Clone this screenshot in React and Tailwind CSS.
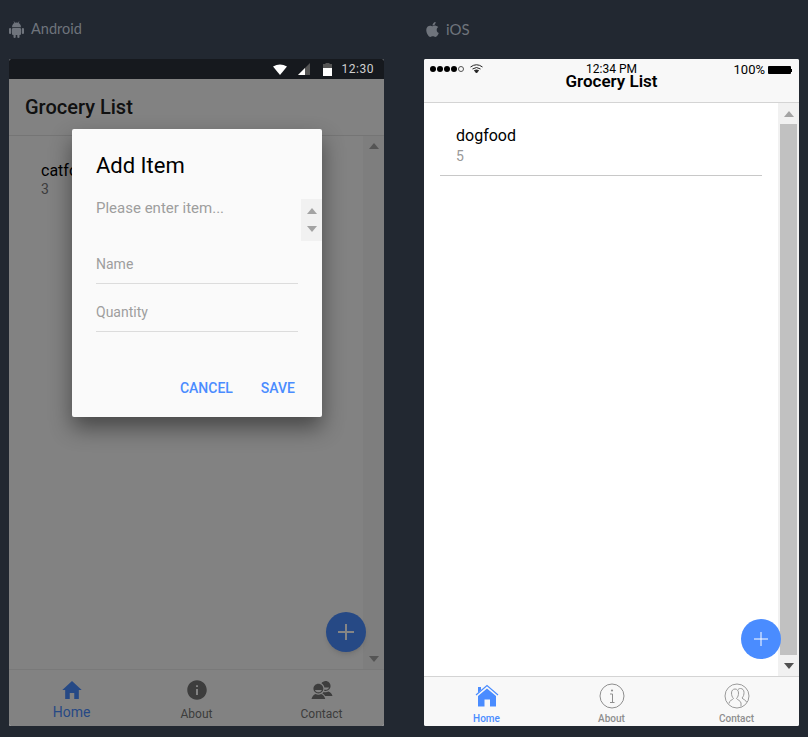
import {FaApple} from "react-icons/fa";
import {IoMdHome, IoMdInformationCircle, IoMdContacts} from "react-icons/io";

function Arrow({up, className}) {
  return (
    <svg width="10" height="6" viewBox="0 0 10 6" className={className}>
      <path d={up ? "M5 0L10 6H0Z" : "M5 6L10 0H0Z"} fill="currentColor" />
    </svg>
  );
}

function Tab({icon, label, className}) {
  return (
    <div className={`flex-1 flex flex-col items-center ${className}`}>
      {icon}
      <span>{label}</span>
    </div>
  );
}

function AndroidLogo() {
  return (
    <svg width="15" height="17" viewBox="0 0 15 17" fill="currentColor">
      <path d="M3 6.200A4.500 4.800 0 0 1 12 6.200Z" />
      <path d="M5 .5L6 2.500M10 .5L9 2.500" stroke="currentColor" strokeWidth=".7" />
      <rect x="3" y="7" width="9" height="7" rx="1" />
      <rect x="0" y="7" width="2.200" height="6" rx="1.100" />
      <rect x="12.800" y="7" width="2.200" height="6" rx="1.100" />
      <rect x="4.500" y="13" width="2.200" height="4" rx="1.100" />
      <rect x="8.300" y="13" width="2.200" height="4" rx="1.100" />
    </svg>
  );
}

function IosHomeIcon() {
  return (
    <svg width="24" height="23" viewBox="0 0 24 23" className="mt-[7px] mb-[6px]">
      <path d="M1 11L12 1.500L23 11" fill="none" stroke="currentColor" strokeWidth="1.200" />
      <path d="M3 3H6V6L3 8.500Z" fill="currentColor" />
      <path d="M3 12L12 4.500L21 12V22.500H15V15.500H9.500V22.500H3Z" fill="currentColor" />
    </svg>
  );
}

function IosInfoIcon() {
  return (
    <svg width="26" height="26" viewBox="0 0 26 26" className="mt-[6px] mb-[4px]" fill="none" stroke="currentColor">
      <circle cx="13" cy="13" r="12" />
      <circle cx="13" cy="7.500" r="1.100" fill="currentColor" stroke="none" />
      <path d="M11 11H13.500V19M11 19.500H15.500" />
    </svg>
  );
}

function IosContactIcon() {
  return (
    <svg width="26" height="26" viewBox="0 0 26 26" className="mt-[6px] mb-[4px]" fill="none" stroke="currentColor" strokeWidth=".9">
      <circle cx="13" cy="13" r="12" />
      <path d="M5 20.500C5 17.500 8.500 17 9.500 15.500C8 14 7.500 12 7.500 10C7.500 7.500 9 6 11 6C13 6 14.500 7.500 14.500 10C14.500 12 14 14 12.500 15.500C13.500 17 16.500 17.500 17 20V23.500" />
      <path d="M14 6.500C14.800 5.700 15.700 5.500 16.500 5.500C18.500 5.500 20 7 20 9.500C20 11.500 19.500 13.500 18 15C19 16.500 21.500 16.500 22.500 19" />
    </svg>
  );
}

function AndroidPhone() {
  return (
    <div className="relative h-[667px] flex flex-col rounded-[2px] overflow-hidden bg-[#fafafa]">
      <div className="h-5 shrink-0 bg-[#16191e] flex items-center justify-end text-[12px] tracking-[0.5px] text-[#d0d0d0] pr-[10px] relative z-20">
        <svg width="14" height="11" viewBox="0 0 14 11" className="mr-[11px]">
          <path d="M0 2.500Q7-1.500 14 2.500L7 11Z" fill="#fff" />
        </svg>
        <svg width="12" height="12" viewBox="0 0 12 12" className="mr-[13px]">
          <path d="M12 0V12H0Z" fill="#555" />
          <path d="M7 5V12H0Z" fill="#fff" />
        </svg>
        <svg width="9" height="13" viewBox="0 0 9 13" className="mr-[10px]">
          <path d="M2.500 1V0H6.500V1H9V5H0V1Z" fill="#555" />
          <rect y="5" width="9" height="8" fill="#fff" />
        </svg>
        <span>12:30</span>
      </div>
      <div className="h-[57px] shrink-0 bg-[#fafafa] border-b border-[#e0e0e0] flex items-center pl-4 text-[20px] font-medium text-[#212121]">
        Grocery List
      </div>
      <div className="flex-1 flex min-h-0">
        <div className="flex-1 pl-[32px] pt-[25px]">
          <div className="text-[16px] leading-[20px] text-black">catfood</div>
          <div className="text-[14px] leading-[16px] text-[#757575]">3</div>
        </div>
        <div className="w-[21px] bg-[#f1f1f1] flex flex-col items-center justify-between py-[7px] text-[#a3a3a3]">
          <Arrow up />
          <Arrow />
        </div>
      </div>
      <div className="h-[57px] shrink-0 bg-[#fafafa] border-t border-[#e8e8e8] flex text-[12px] leading-[14px] text-[#757575]">
        <Tab
          icon={<IoMdHome size={24} className="mt-[8px] mb-[3px]" />}
          label={<span className="text-[14px]">Home</span>}
          className="text-[#4a8cff]"
        />
        <Tab icon={<IoMdInformationCircle size={24} className="mt-[8px] mb-[5px] text-[#757575]" />} label="About" />
        <Tab icon={<IoMdContacts size={24} className="mt-[8px] mb-[5px] text-[#757575]" />} label="Contact" />
      </div>
      <div className="absolute right-[18px] bottom-[74px] w-10 h-10 rounded-full bg-[#4a8cff] text-white flex items-center justify-center shadow-md">
        <svg width="16" height="16" viewBox="0 0 16 16">
          <path d="M8 0V16M0 8H16" stroke="currentColor" strokeWidth="2" />
        </svg>
      </div>

      <div className="absolute inset-x-0 top-5 bottom-0 bg-black/[0.48]" />

      <div className="absolute left-[63px] top-[70px] w-[250px] h-[288px] bg-[#fafafa] rounded-[2px] shadow-[0_11px_22px_rgba(0,0,0,0.45)] flex flex-col pl-6">
        <div className="text-[22px] leading-[28px] text-black mt-[23px]">Add Item</div>
        <div className="relative mt-[18px] text-[15px] leading-[20px] text-[#9e9e9e] h-[42px]">
          Please enter item...
          <div className="absolute right-0 top-[1px] w-[21px] h-[42px] bg-[#f1f1f1] flex flex-col items-center justify-center gap-[12px] text-[#a3a3a3]">
            <Arrow up />
            <Arrow />
          </div>
        </div>
        <div className="w-[202px] h-[34px] mt-[10px] border-b border-[#dcdcdc] text-[14px] leading-[20px] text-[#9e9e9e] pt-[4px]">Name</div>
        <div className="w-[202px] h-[34px] mt-[14px] border-b border-[#dcdcdc] text-[14px] leading-[20px] text-[#9e9e9e] pt-[4px]">Quantity</div>
        <div className="flex justify-end gap-7 pr-[27px] mt-[46px] text-[14px] leading-[20px] font-medium text-[#4a8cff]">
          <span>CANCEL</span>
          <span>SAVE</span>
        </div>
      </div>
    </div>
  );
}

function IosPhone() {
  return (
    <div className="relative h-[667px] flex flex-col rounded-[2px] overflow-hidden bg-white">
      <div className="relative h-[44px] shrink-0 bg-[#f8f8f8] border-b border-[#d4d4d4] flex justify-center">
        <div className="absolute left-[6px] top-[5px] flex items-center gap-[1px]">
          <span className="w-[6px] h-[6px] rounded-full bg-black" />
          <span className="w-[6px] h-[6px] rounded-full bg-black" />
          <span className="w-[6px] h-[6px] rounded-full bg-black" />
          <span className="w-[6px] h-[6px] rounded-full bg-black" />
          <span className="w-[6px] h-[6px] rounded-full border border-[#555]" />
          <svg width="13" height="9" viewBox="0 0 13 9" className="ml-[5px]" fill="none" stroke="#222">
            <path d="M.5 3Q6.500-1.500 12.500 3M2.500 5Q6.500 2 10.500 5" />
            <path d="M4.500 6.500Q6.500 5.500 8.500 6.500L6.500 9Z" fill="#222" />
          </svg>
        </div>
        <div className="absolute top-[3px] left-0 right-0 text-center text-[12px] leading-[14px] text-black">12:34 PM</div>
        <div className="absolute right-[7px] top-[3px] flex items-center text-[13px] leading-[16px] text-black">
          100%
          <span className="ml-[3px] w-[23px] h-[8px] bg-black rounded-[1px]" />
          <span className="w-[1px] h-[3px] bg-black" />
        </div>
        <div className="mt-[12px] text-[17px] leading-[20px] font-semibold text-black">Grocery List</div>
      </div>
      <div className="flex-1 flex min-h-0">
        <div className="flex-1 px-4 pt-[23px]">
          <div className="border-b border-[#c8c8c8] pl-4 h-[50px]">
            <div className="text-[16px] leading-[20px] text-black">dogfood</div>
            <div className="text-[14px] leading-[20px] text-[#999]">5</div>
          </div>
        </div>
        <div className="w-[21px] bg-[#f1f1f1] flex flex-col items-center">
          <div className="h-[21px] w-full flex items-center justify-center text-[#a3a3a3]"><Arrow up /></div>
          <div className="flex-1 w-[17px] bg-[#c1c1c1]" />
          <div className="h-[21px] w-full flex items-center justify-center text-[#505050]"><Arrow /></div>
        </div>
      </div>
      <div className="h-[50px] shrink-0 bg-[#f8f8f8] border-t border-[#d4d4d4] flex text-[10px] leading-[12px] font-medium text-[#8e8e8e]">
        <Tab icon={<IosHomeIcon />} label="Home" className="text-[#4a8cff]" />
        <Tab icon={<IosInfoIcon />} label="About" />
        <Tab icon={<IosContactIcon />} label="Contact" />
      </div>
      <div className="absolute right-[18px] bottom-[67px] w-10 h-10 rounded-full bg-[#4a8cff] text-white flex items-center justify-center">
        <svg width="14" height="14" viewBox="0 0 14 14">
          <path d="M7 0V14M0 7H14" stroke="currentColor" strokeWidth="1" />
        </svg>
      </div>
    </div>
  );
}

export default function App() {
  return (
    <div className="w-[808px] h-[737px] overflow-hidden bg-[#222831] flex gap-10 pl-[9px] font-['Roboto',sans-serif]">
      <div className="w-[375px]">
        <div className="h-[59px] flex items-center gap-[7px] text-[14.500px] font-['Lato',sans-serif] text-[#6f747c] pb-[1px]">
          <AndroidLogo />
          Android
        </div>
        <AndroidPhone />
      </div>
      <div className="w-[375px]">
        <div className="h-[59px] flex items-center gap-[5px] text-[15px] font-['Lato',sans-serif] text-[#6f747c] pb-[1px]">
          <FaApple size={17} />
          iOS
        </div>
        <IosPhone />
      </div>
    </div>
  );
}
